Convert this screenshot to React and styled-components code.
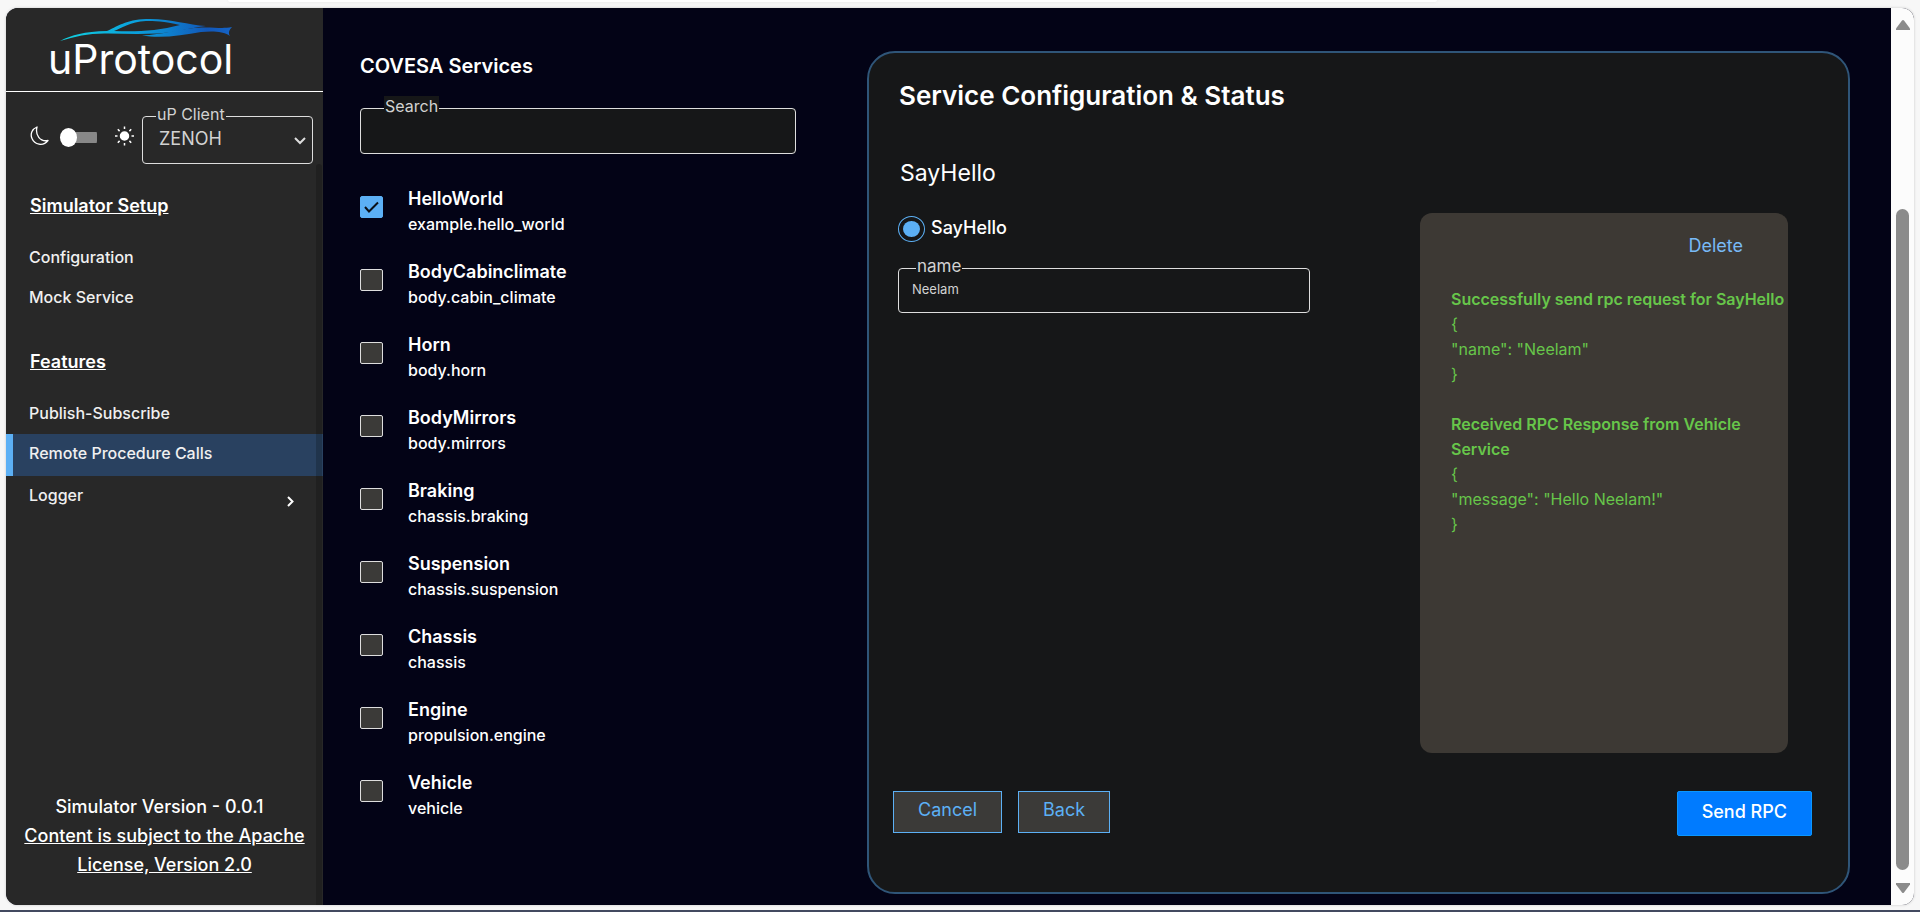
import React, { useState } from "react";
import styled, { createGlobalStyle } from "styled-components";

const GlobalStyle = createGlobalStyle`
  *, *::before, *::after { box-sizing: border-box; }
  body {
    margin: 0;
    background: #f7f7f7;
    color: #ffffff;
    font-family: Inter, "Open Sans", sans-serif;
    font-size: 16px;
    line-height: 24px;
  }
  h1, h2, h3, p, ul { margin: 0; padding: 0; }
  ul { list-style: none; }
  button, input, select { font: inherit; color: inherit; }
`;

const Page = styled.div`
  min-height: 100vh;
  display: flex;
  flex-direction: column;
  padding: 0 6px;
  border-bottom: 2px solid #434a60;
`;

const BrowserTab = styled.div`
  height: 2px;
  margin: 0 25% 6px 222px;
  border-radius: 0 0 8px 8px;
  background: #ffffff;
  box-shadow: 0 0 3px #e2e2e2;
`;

const Frame = styled.div`
  flex: 1;
  display: flex;
  margin-bottom: 5px;
  border-radius: 12px;
  overflow: hidden;
  background: #030316;
  box-shadow: 0 0 2px 1px #e0e0e0;
`;

const Sidebar = styled.aside`
  width: 317px;
  flex: none;
  display: flex;
  flex-direction: column;
  background: #282828;
`;

const Brand = styled.header`
  height: 84px;
  padding: 11px 0 0 42px;
  border-bottom: 1px solid #ffffff;
`;

const CarMark = styled.svg`
  display: block;
  width: 173px;
  height: 24px;
  margin: 0 0 -4px 12px;
`;

const BrandName = styled.div`
  font-size: 41px;
  line-height: 40px;
`;

const Toolbar = styled.div`
  display: flex;
  align-items: flex-start;
  padding: 12px 10px 0 24px;
`;

const ThemeSwitch = styled.div`
  flex: 1;
  display: flex;
  align-items: center;
  justify-content: space-between;
  margin: 20px 8px 0 0;
`;

const ThemeIcon = styled.svg`
  width: 19px;
  height: 20px;
`;

const Toggle = styled.input`
  appearance: none;
  width: 37px;
  height: 19px;
  margin: 4px 7px 0 0;
  display: flex;
  align-items: center;
  background: linear-gradient(#888888, #888888) 5px 4px / 32px 11px no-repeat;
  border-radius: 6px;
  &::before {
    content: "";
    width: 17px;
    height: 19px;
    border-radius: 50%;
    background: #ffffff;
  }
`;

const Field = styled.fieldset`
  min-width: 0;
  margin: 0;
  padding: 0;
  border: 1px solid #dedede;
  border-radius: 4px;
  color: #d2d2d2;
  background: ${(p) => p.$fill || "transparent"};
`;

const FieldLabel = styled.legend`
  margin-left: ${(p) => p.$indent}px;
  padding: 0 1px 4px;
  font-size: ${(p) => p.$size || 16}px;
  line-height: 20px;
  background: ${(p) => p.$fill || "transparent"};
  label { display: block; }
`;

const ClientField = styled(Field)`
  width: 171px;
`;

const SelectRow = styled.div`
  display: flex;
  align-items: flex-start;
  height: 35px;
  padding-right: 6px;
  svg { flex: none; width: 12px; height: 8px; margin-top: 9px; pointer-events: none; }
`;

const Select = styled.select`
  appearance: none;
  flex: 1;
  min-width: 0;
  height: 22px;
  padding: 0 0 0 16px;
  border: 0;
  outline: 0;
  background: transparent;
  font-size: 18px;
  line-height: 22px;
`;

const SidebarBody = styled.div`
  flex: 1;
  position: relative;
  display: flex;
  flex-direction: column;
  padding-top: 30px;
  &::after {
    content: "";
    position: absolute;
    top: 0;
    right: 1px;
    bottom: 0;
    width: 6px;
    border-radius: 3px 3px 0 0;
    background: rgba(0, 0, 0, 0.2);
    pointer-events: none;
  }
`;

const NavTitle = styled.h2`
  margin-left: 24px;
  font-size: 18px;
  line-height: 24px;
  font-weight: 600;
  text-decoration: underline;
`;

const NavList = styled.ul`
  margin: 20px 0 32px;
`;

const NavLink = styled.a`
  display: flex;
  justify-content: space-between;
  height: ${(p) => (p.$active ? 42 : 40)}px;
  padding: 7px 29px 0 ${(p) => (p.$active ? 16 : 23)}px;
  border-left: ${(p) => (p.$active ? "7px solid #5cb0f5" : "0")};
  background: ${(p) => (p.$active ? "#294160" : "transparent")};
  color: #f0f0f0;
  font-size: 16px;
  font-weight: 500;
  text-decoration: none;
  svg { width: 7px; height: 11px; margin-top: 13px; }
`;

const Legal = styled.footer`
  margin-top: auto;
  padding: 0 8px 26px;
  font-size: 18px;
  line-height: 29px;
  font-weight: 500;
  text-align: center;
  p { padding-right: 10px; }
  a { color: inherit; }
`;

const Main = styled.main`
  flex: 1;
  min-width: 0;
  display: grid;
  grid-template-columns: minmax(0, 436fr) minmax(0, 983fr);
  gap: 71px;
  padding: 43px 41px 11px 37px;
`;

const PanelTitle = styled.h1`
  font-size: 20px;
  line-height: 30px;
  font-weight: 600;
`;

const SearchField = styled(Field)`
  margin-top: 15px;
`;

const TextInput = styled.input`
  display: block;
  width: 100%;
  height: ${(p) => p.$height || 33}px;
  padding: 0 13px 14px;
  border: 0;
  outline: 0;
  background: transparent;
  font-size: 13px;
`;

const ServiceList = styled.ul`
  display: grid;
  gap: 23px;
  margin-top: 32px;
`;

const ServiceRow = styled.label`
  display: flex;
  align-items: flex-start;
  gap: 25px;
`;

const CheckFrame = styled.span`
  display: grid;
  margin-top: 10px;
  > * { grid-area: 1 / 1; }
  svg { width: 15px; height: 12px; place-self: center; pointer-events: none; }
`;

const Checkbox = styled.input`
  appearance: none;
  width: 23px;
  height: 22px;
  margin: 0;
  border: 1px solid #dedede;
  border-radius: 2px;
  background: #3b3a38;
  &:checked { border-color: #5cb0f5; background: #5cb0f5; }
`;

const ServiceName = styled.span`
  display: block;
  font-size: 18px;
  line-height: 26px;
  font-weight: 600;
`;

const ServiceTopic = styled.span`
  display: block;
  font-size: 16px;
  font-weight: 500;
`;

const Card = styled.section`
  display: flex;
  flex-direction: column;
  padding: 25px 36px 56px 24px;
  border: 2px solid #2f5578;
  border-radius: 28px;
  background: #161718;
`;

const CardTitle = styled.h2`
  margin-left: 6px;
  font-size: 26px;
  line-height: 36px;
  font-weight: 600;
`;

const MethodTitle = styled.h3`
  margin: 43px 0 0 7px;
  font-size: 23px;
  line-height: 32px;
  font-weight: 400;
`;

const CardBody = styled.div`
  flex: 1;
  display: grid;
  grid-template-columns: minmax(0, 412fr) minmax(0, 368fr);
  gap: 110px;
  margin: 24px 24px 38px 5px;
`;

const RadioRow = styled.label`
  display: flex;
  align-items: flex-start;
  gap: 6px;
  padding-top: 3px;
  margin-bottom: 14px;
  font-size: 18px;
  font-weight: 500;
`;

const Radio = styled.input`
  appearance: none;
  flex: none;
  width: 27px;
  height: 26px;
  margin: 0;
  border: 1px solid #5cb0f5;
  border-radius: 50%;
  &:checked {
    padding: 4px;
    background: #5cb0f5 content-box;
  }
`;

const LogPanel = styled.section`
  padding: 21px 0 20px 31px;
  border-radius: 12px;
  background: #3d3934;
  color: #67c64a;
  font-size: 16px;
  line-height: 25px;
  p { min-height: 25px; }
`;

const DeleteButton = styled.button`
  display: block;
  margin: 0 45px 29px auto;
  padding: 0;
  border: 0;
  background: transparent;
  color: #78b9f6;
  font-size: 18px;
  line-height: 24px;
`;

const LogHeading = styled.p`
  font-weight: 600;
`;

const LogEntry = styled.div`
  margin-bottom: 25px;
`;

const Actions = styled.div`
  display: flex;
  align-items: flex-start;
  gap: 16px;
`;

const Button = styled.button`
  padding: 6px 24px 10px;
  border: 1px solid #5cb0f5;
  background: #3b3a38;
  color: #5cb0f5;
  font-size: 18px;
  font-weight: 400;
  line-height: 24px;
`;

const PrimaryButton = styled(Button)`
  margin-left: auto;
  padding: 8px 24px 11px;
  border-color: #0a97ff;
  border-radius: 2px;
  background: #007bff;
  color: #ffffff;
  font-weight: 500;
`;

const ScrollRail = styled.div`
  flex: none;
  width: 23px;
  display: flex;
  flex-direction: column;
  align-items: center;
  padding: 12px 0;
  background: #fcfcfc;
  svg { flex: none; width: 14px; height: 10px; }
`;

const ScrollGap = styled.div`
  flex: 179;
`;

const ScrollThumb = styled.div`
  flex: 661;
  width: 13px;
  margin-bottom: 13px;
  border-radius: 7px;
  background: #8b8b8b;
`;

const services = [
  ["HelloWorld", "example.hello_world"],
  ["BodyCabinclimate", "body.cabin_climate"],
  ["Horn", "body.horn"],
  ["BodyMirrors", "body.mirrors"],
  ["Braking", "chassis.braking"],
  ["Suspension", "chassis.suspension"],
  ["Chassis", "chassis"],
  ["Engine", "propulsion.engine"],
  ["Vehicle", "vehicle"],
];

const log = [
  {
    heading: "Successfully send rpc request for SayHello",
    lines: ["{", '"name": "Neelam"', "}"],
  },
  {
    heading: "Received RPC Response from Vehicle Service",
    lines: ["{", '"message": "Hello Neelam!"', "}"],
  },
];

function CarLogo() {
  return (
    <CarMark viewBox="0 0 173 24" aria-hidden="true">
      <defs>
        <linearGradient id="car" gradientUnits="userSpaceOnUse" x1="0" y1="0" x2="173" y2="0">
          <stop offset="0" stopColor="#12d3e0" />
          <stop offset="0.45" stopColor="#0a9fdc" />
          <stop offset="0.85" stopColor="#1257b8" />
          <stop offset="1" stopColor="#1565c8" />
        </linearGradient>
      </defs>
      <path
        fill="url(#car)"
        fillRule="evenodd"
        d="M0 22C12 16 24 12.500 47 12C60 6 68 0 90 0C112 0 128 6 146 7C136 8 128 10 118 12C96 16 72 15 48 14.500C30 14 16 17 0 22ZM54 12C76 13 98 12 120 6C104 2 94 2 86 2C70 3 62 9 54 12Z"
      />
      <path
        fill="url(#car)"
        d="M82 16.500C102 16 120 9 142 8.500C154 8 162 10 172 8C169 11 168 14 170 17C163 12 152 12 141 13C122 16 102 20 82 16.500Z"
      />
    </CarMark>
  );
}

function MoonIcon() {
  return (
    <ThemeIcon viewBox="0 0 19 20" fill="none" stroke="#fff" strokeWidth="1.300" strokeLinejoin="round">
      <path d="M7 1C2 3 0 8 2 12.500C4.500 18.500 13 21 18 14.500C10 16 5 9 7 1Z" />
    </ThemeIcon>
  );
}

function SunIcon() {
  return (
    <ThemeIcon viewBox="0 0 19 20" stroke="#fff" strokeWidth="1.500">
      <circle cx="9.500" cy="10" r="4" fill="#fff" />
      <path d="M9.500 .5V3M9.500 17V19.500M0 10H2.500M16.500 10H19M2.800 3.300L4.600 5.100M14.400 14.900L16.200 16.700M2.800 16.700L4.600 14.900M14.400 5.100L16.200 3.300" />
    </ThemeIcon>
  );
}

function Navigation() {
  return (
    <nav>
      <NavTitle>Simulator Setup</NavTitle>
      <NavList>
        <li><NavLink href="#configuration">Configuration</NavLink></li>
        <li><NavLink href="#mock-service">Mock Service</NavLink></li>
      </NavList>
      <NavTitle>Features</NavTitle>
      <NavList>
        <li><NavLink href="#publish-subscribe">Publish-Subscribe</NavLink></li>
        <li><NavLink href="#rpc" $active aria-current="page">Remote Procedure Calls</NavLink></li>
        <li>
          <NavLink href="#logger">
            Logger
            <svg viewBox="0 0 7 11" fill="none" stroke="#fff" strokeWidth="2" aria-hidden="true">
              <path d="M1 1L5.500 5.500L1 10" />
            </svg>
          </NavLink>
        </li>
      </NavList>
    </nav>
  );
}

export default function App() {
  const [selected, setSelected] = useState(["HelloWorld"]);
  const [query, setQuery] = useState("");
  const [name, setName] = useState("Neelam");
  const toggle = (id) =>
    setSelected((list) => (list.includes(id) ? list.filter((s) => s !== id) : [...list, id]));

  return (
    <Page>
      <GlobalStyle />
      <BrowserTab />
      <Frame>
        <Sidebar>
          <Brand>
            <CarLogo />
            <BrandName>uProtocol</BrandName>
          </Brand>
          <Toolbar>
            <ThemeSwitch>
              <MoonIcon />
              <Toggle type="checkbox" aria-label="Light theme" />
              <SunIcon />
            </ThemeSwitch>
            <ClientField>
              <FieldLabel $indent={13}><label htmlFor="client">uP Client</label></FieldLabel>
              <SelectRow>
                <Select id="client" defaultValue="ZENOH">
                  <option>ZENOH</option>
                </Select>
                <svg viewBox="0 0 12 8" fill="none" stroke="#ddd" strokeWidth="2" aria-hidden="true">
                  <path d="M1 1L6 6L11 1" />
                </svg>
              </SelectRow>
            </ClientField>
          </Toolbar>
          <SidebarBody>
            <Navigation />
            <Legal>
              <p>Simulator Version - 0.0.1</p>
              <a href="#license">Content is subject to the Apache License, Version 2.0</a>
            </Legal>
          </SidebarBody>
        </Sidebar>

        <Main>
          <section>
            <PanelTitle>COVESA Services</PanelTitle>
            <SearchField $fill="#161718">
              <FieldLabel $indent={23} $fill="#161718"><label htmlFor="search">Search</label></FieldLabel>
              <TextInput id="search" value={query} onChange={(e) => setQuery(e.target.value)} />
            </SearchField>
            <ServiceList>
              {services.map(([title, topic]) => (
                <li key={title}>
                  <ServiceRow>
                    <CheckFrame>
                      <Checkbox
                        type="checkbox"
                        checked={selected.includes(title)}
                        onChange={() => toggle(title)}
                      />
                      {selected.includes(title) && (
                        <svg viewBox="0 0 15 12" fill="none" stroke="#0b1118" strokeWidth="2" aria-hidden="true">
                          <path d="M1 6L5 10.500L14 1.500" />
                        </svg>
                      )}
                    </CheckFrame>
                    <span>
                      <ServiceName>{title}</ServiceName>
                      <ServiceTopic>{topic}</ServiceTopic>
                    </span>
                  </ServiceRow>
                </li>
              ))}
            </ServiceList>
          </section>

          <Card>
            <CardTitle>Service Configuration &amp; Status</CardTitle>
            <MethodTitle>SayHello</MethodTitle>
            <CardBody>
              <div>
                <RadioRow>
                  <Radio type="radio" name="method" defaultChecked />
                  SayHello
                </RadioRow>
                <Field>
                  <FieldLabel $indent={17} $size={17}><label htmlFor="name">name</label></FieldLabel>
                  <TextInput id="name" $height={32} value={name} onChange={(e) => setName(e.target.value)} />
                </Field>
              </div>
              <LogPanel>
                <DeleteButton type="button">Delete</DeleteButton>
                {log.map((entry) => (
                  <LogEntry key={entry.heading}>
                    <LogHeading>{entry.heading}</LogHeading>
                    {entry.lines.map((line) => <p key={line}>{line}</p>)}
                  </LogEntry>
                ))}
              </LogPanel>
            </CardBody>
            <Actions>
              <Button type="button">Cancel</Button>
              <Button type="button">Back</Button>
              <PrimaryButton type="button">Send RPC</PrimaryButton>
            </Actions>
          </Card>
        </Main>

        <ScrollRail aria-hidden="true">
          <svg viewBox="0 0 14 10"><path fill="#8b8b8b" d="M6 .5Q7-.5 8 .5L14 8.500V10H0V8.500Z" /></svg>
          <ScrollGap />
          <ScrollThumb />
          <svg viewBox="0 0 14 10"><path fill="#8b8b8b" d="M6 9.500Q7 10.500 8 9.500L14 1.500V0H0V1.500Z" /></svg>
        </ScrollRail>
      </Frame>
    </Page>
  );
}
